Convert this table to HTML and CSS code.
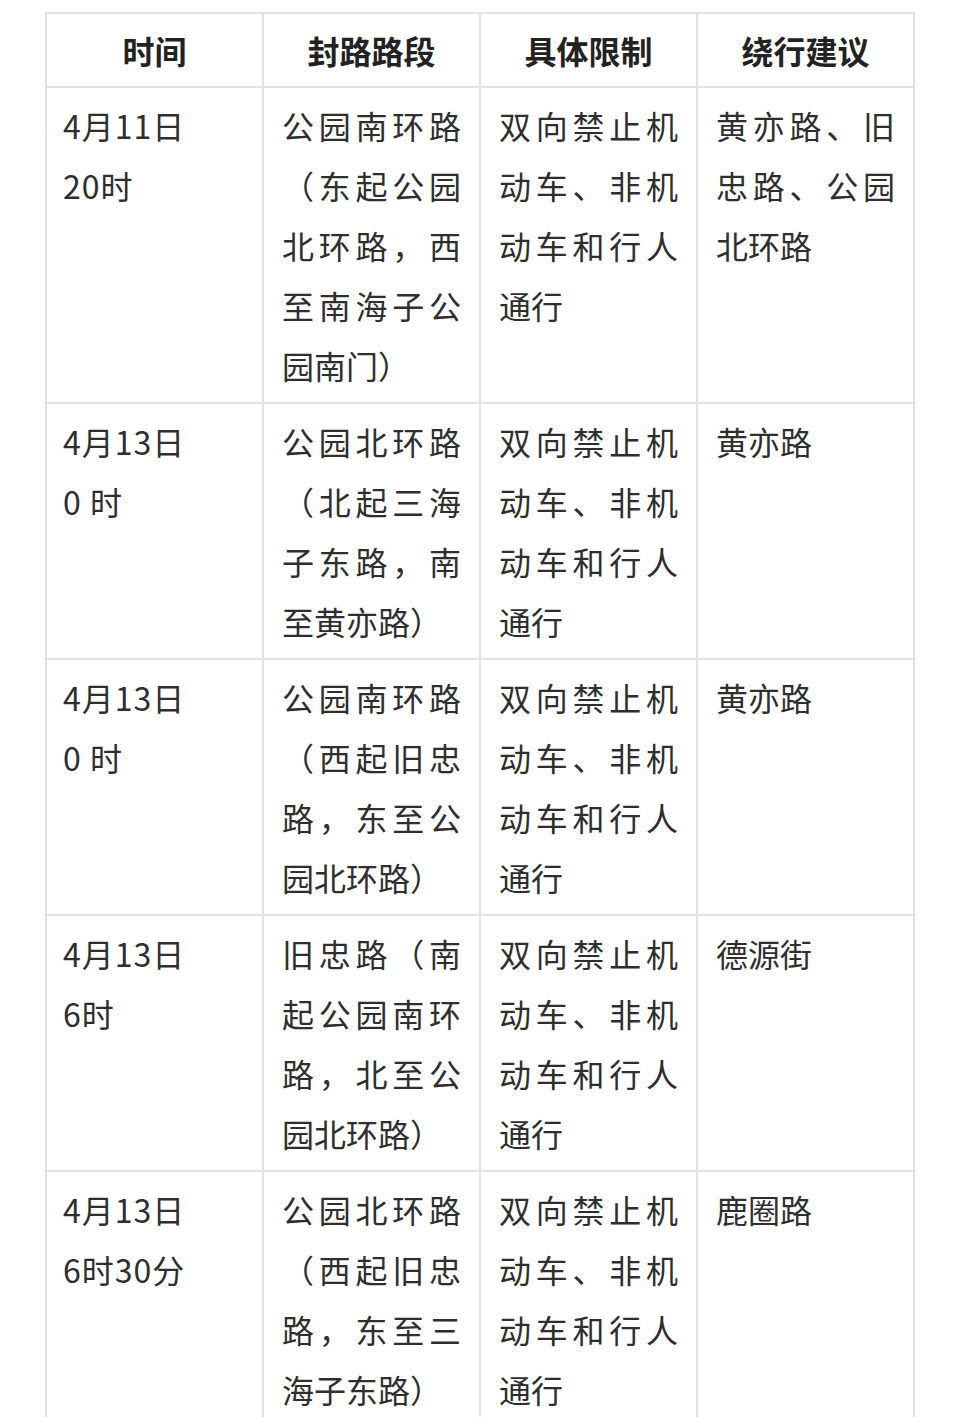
FILE: index.html
```html
<!DOCTYPE html>
<html lang="zh-CN">
<head>
<meta charset="utf-8">
<title>封路信息</title>
<link rel="stylesheet" href="styles.css">
</head>
<body>
<div class="page">
  <table class="closures">
    <thead>
      <tr>
        <th>时间</th>
        <th>封路路段</th>
        <th>具体限制</th>
        <th>绕行建议</th>
      </tr>
    </thead>
    <tbody>
      <tr>
        <td class="time">4月11日<br>20时</td>
        <td>公园南环路（东起公园北环路，西至南海子公园南门）</td>
        <td>双向禁止机动车、非机动车和行人通行</td>
        <td>黄亦路、旧忠路、公园北环路</td>
      </tr>
      <tr>
        <td class="time">4月13日<br>0 时</td>
        <td>公园北环路（北起三海子东路，南至黄亦路）</td>
        <td>双向禁止机动车、非机动车和行人通行</td>
        <td>黄亦路</td>
      </tr>
      <tr>
        <td class="time">4月13日<br>0 时</td>
        <td>公园南环路（西起旧忠路，东至公园北环路）</td>
        <td>双向禁止机动车、非机动车和行人通行</td>
        <td>黄亦路</td>
      </tr>
      <tr>
        <td class="time">4月13日<br>6时</td>
        <td>旧忠路（南起公园南环路，北至公园北环路）</td>
        <td>双向禁止机动车、非机动车和行人通行</td>
        <td>德源街</td>
      </tr>
      <tr>
        <td class="time">4月13日<br>6时30分</td>
        <td>公园北环路（西起旧忠路，东至三海子东路）</td>
        <td>双向禁止机动车、非机动车和行人通行</td>
        <td>鹿圈路</td>
      </tr>
    </tbody>
  </table>
</div>
</body>
</html>
```
FILE: styles.css
```css
html, body {
  margin: 0;
  padding: 0;
  background: #ffffff;
}

.page {
  padding: 12px 45px 0 45px;
  font-family: "Noto Sans CJK SC", "Noto Sans", sans-serif;
  color: #2e2e2e;
}

.closures {
  width: 100%;
  table-layout: fixed;
  border-collapse: collapse;
  border: 2px solid #e2e2e2;
}

.closures th,
.closures td {
  border: 2px solid #e2e2e2;
  font-size: 32px;
  line-height: 60px;
  padding: 7px 18px;
  vertical-align: top;
}

.closures th {
  padding-top: 6px;
  padding-bottom: 6px;
  font-weight: 700;
  color: #222222;
  text-align: center;
}

.closures td {
  font-weight: 400;
  text-align: justify;
}

.closures td.time {
  padding-left: 16px;
  text-align: left;
  letter-spacing: 1px;
}
```
